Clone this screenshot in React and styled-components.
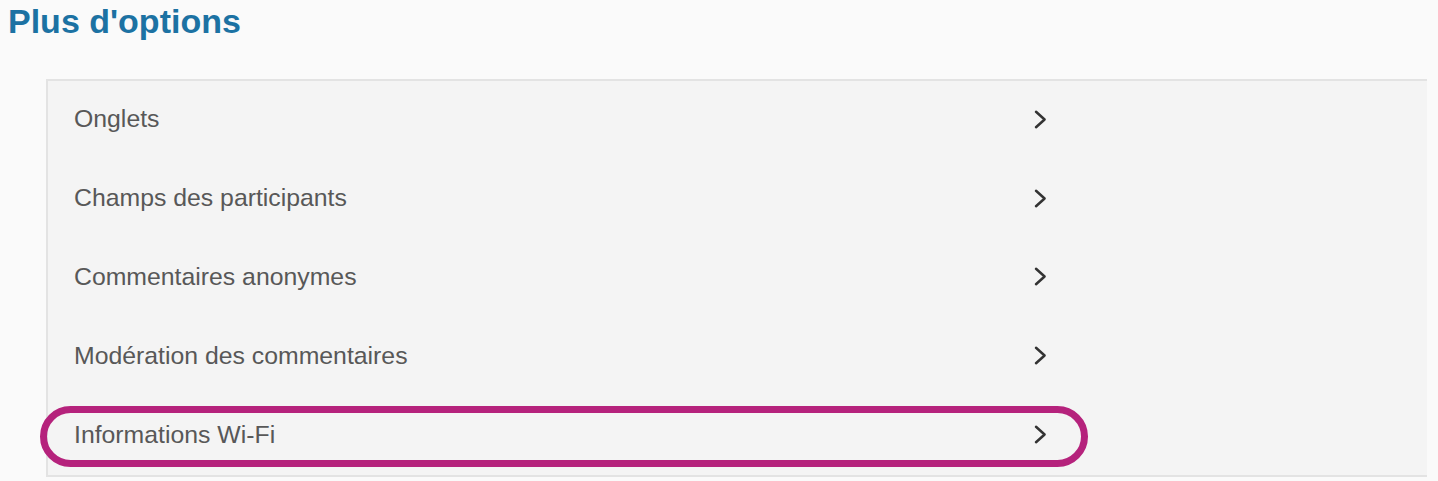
import React from "react";
import styled, { createGlobalStyle } from "styled-components";

const GlobalStyle = createGlobalStyle`
  html, body {
    margin: 0;
    padding: 0;
    background: #fafafa;
    font-family: "Liberation Sans", Arial, sans-serif;
  }
`;

const Page = styled.div`
  width: 1438px;
  height: 481px;
  overflow: hidden;
  padding-top: 2px;
  box-sizing: border-box;
`;

const Title = styled.h2`
  margin: 0;
  padding-left: 8px;
  font-size: 34px;
  line-height: 39px;
  font-weight: bold;
  color: #1c72a3;
`;

const Panel = styled.div`
  margin: 38px 0 0 46px;
  width: 1381px;
  box-sizing: border-box;
  background: #f4f4f4;
  border: 2px solid #e3e3e3;
  border-right: none;
  display: flex;
  flex-direction: column;
`;

const Row = styled.div`
  position: relative;
  width: 1025px;
  height: 78.8px;
  box-sizing: border-box;
  padding: 0 27px 2px 26px;
  display: flex;
  align-items: center;
  justify-content: space-between;
  cursor: pointer;

  ${(p) =>
    p.$highlighted &&
    `
    &::after {
      content: "";
      position: absolute;
      left: -8px;
      top: 10px;
      width: 1048px;
      height: 61px;
      box-sizing: border-box;
      border: 7px solid #b5227c;
      border-radius: 31px;
      pointer-events: none;
    }
  `}
`;

const Label = styled.span`
  font-size: 24.8px;
  color: #585858;
`;

const Chevron = styled.svg`
  width: 13px;
  height: 19px;
  flex: none;
  margin-right: -1px;
`;

const items = [
  "Onglets",
  "Champs des participants",
  "Commentaires anonymes",
  "Modération des commentaires",
  "Informations Wi-Fi",
];

export default function App() {
  return (
    <>
      <GlobalStyle />
      <Page>
        <Title>Plus d'options</Title>
        <Panel>
          {items.map((label, i) => (
            <Row key={label} $highlighted={i === items.length - 1}>
              <Label>{label}</Label>
              <Chevron viewBox="0 0 13 19" aria-hidden="true">
                <path
                  d="M2 1.8 L10.6 9.5 L2 17.2"
                  fill="none"
                  stroke="#333"
                  strokeWidth="2.5"
                  strokeLinecap="round"
                  strokeLinejoin="round"
                />
              </Chevron>
            </Row>
          ))}
        </Panel>
      </Page>
    </>
  );
}
